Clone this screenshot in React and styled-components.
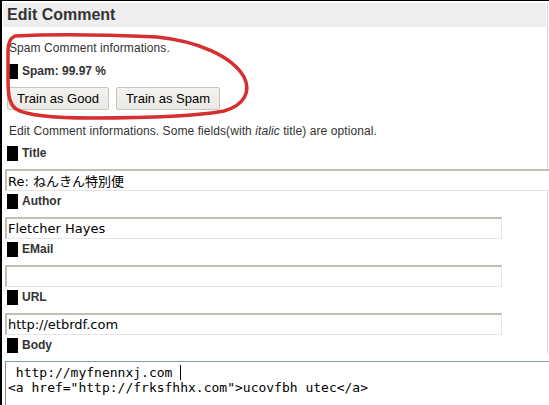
import React from "react";
import styled, { createGlobalStyle } from "styled-components";

const GlobalStyle = createGlobalStyle`
  html, body {
    margin: 0;
    padding: 0;
    background: #fff;
  }
  body {
    font-family: "Liberation Sans", Arial, sans-serif;
    overflow: hidden;
  }
`;

const Page = styled.div`
  position: relative;
  width: 547px;
  height: 404px;
  border-top: 1px solid #000;
  border-left: 2px solid #000;
  overflow: hidden;
`;

const Panel = styled.div`
  width: 545px;
  border-right: 1px solid #d8d6d0;
`;

const Header = styled.h2`
  margin: 2px 1px 0 1px;
  height: 24px;
  line-height: 24px;
  padding-left: 4px;
  background: #eeeeee;
  color: #333;
  font-size: 16px;
  font-weight: bold;
`;

const Content = styled.div`
  padding-left: 3px;
`;

const Note = styled.p`
  margin: ${(p) => p.$top}px 0 0 4px;
  font-size: 12px;
  line-height: 14px;
  letter-spacing: 0.08px;
  color: #333;
`;

const Label = styled.h4`
  margin: ${(p) => (p.$top != null ? p.$top : 3)}px 0
    ${(p) => (p.$bottom != null ? p.$bottom : 8)}px 2px;
  height: 15px;
  line-height: 15px;
  border-left: 11px solid #000;
  padding-left: 4px;
  font-size: 12px;
  font-weight: bold;
  color: #333;
`;

const ButtonRow = styled.div`
  display: flex;
  gap: 7px;
  margin: 8px 0 0 2px;
`;

const Button = styled.button`
  height: 23px;
  padding: 0 9px;
  background: linear-gradient(#f4f3f1, #e9e8e4);
  border: 1px solid #c9c6bf;
  border-radius: 2px;
  font-family: "Liberation Sans", Arial, sans-serif;
  font-size: 13px;
  color: #000;
`;

const Field = styled.input`
  display: block;
  box-sizing: border-box;
  width: ${(p) => p.$width}px;
  height: 22px;
  margin: 0;
  padding: 0 2px 0 1px;
  border-style: solid;
  border-width: 2px 1px 1px 2px;
  border-color: #c2beb6 #e6e5e1 #e6e5e1 #c2beb6;
  background: #fff;
  font-family: "DejaVu Sans", "Noto Sans CJK JP", sans-serif;
  font-size: 13px;
  color: #000;
  outline: none;
`;

const BodyArea = styled.div`
  box-sizing: border-box;
  width: 560px;
  height: 60px;
  margin-left: 3px;
  border-top: 1px solid #7f9db9;
  border-left: 1px solid #8a8a8a;
  padding: 3px 2px;
  font-family: "DejaVu Sans Mono", monospace;
  font-size: 13px;
  line-height: 15px;
  color: #000;
  white-space: pre;
`;

const Caret = styled.span`
  display: inline-block;
  width: 0;
  height: 15px;
  border-left: 1px solid #000;
  vertical-align: top;
`;

const Scribble = styled.svg`
  position: absolute;
  left: 0;
  top: 0;
  pointer-events: none;
`;

export default function App() {
  return (
    <>
      <GlobalStyle />
      <Page>
        <Panel>
          <Header>Edit Comment</Header>
          <Content>
            <Note $top={14}>Spam Comment informations.</Note>
            <Label $top={9} $bottom={0}>
              Spam: 99.97 %
            </Label>
            <ButtonRow>
              <Button>Train as Good</Button>
              <Button>Train as Spam</Button>
            </ButtonRow>
            <Note $top={14}>
              Edit Comment informations. Some fields(with <i>italic</i> title)
              are optional.
            </Note>
            <Label $top={8}>Title</Label>
            <Field $width={545} defaultValue="Re: ねんきん特別便" />
            <Label>Author</Label>
            <Field $width={497} defaultValue="Fletcher Hayes" />
            <Label>EMail</Label>
            <Field $width={497} defaultValue="" />
            <Label>URL</Label>
            <Field $width={497} defaultValue="http://etbrdf.com" />
            <Label>Body</Label>
          </Content>
        </Panel>
        <BodyArea>
          {" http://myfnennxj.com "}
          <Caret />
          {"\n"}
          {'<a href="http://frksfhhx.com">ucovfbh utec</a>'}
        </BodyArea>
        <Scribble width="549" height="405" viewBox="0 0 549 405">
          <path
            d="M 13 35 C 50 33, 110 34, 155 36 C 195 40, 230 55, 242 76 C 249 90, 243 104, 222 110 C 190 116, 140 117, 90 117 C 55 117, 25 115, 14 108 C 6 102, 6 90, 6 75 L 6 50 C 6 42, 8 37, 13 35"
            fill="none"
            stroke="#d62f2f"
            strokeWidth="3.5"
            strokeLinecap="round"
          />
        </Scribble>
      </Page>
    </>
  );
}
